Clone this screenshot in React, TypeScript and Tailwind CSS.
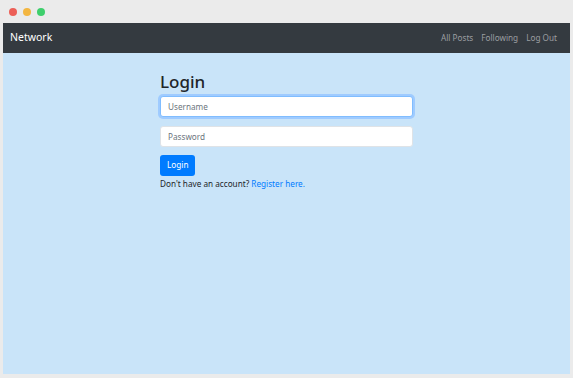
export default function App() {
  return (
    <div className="w-[573px] h-[378px] bg-[#ebebeb] flex flex-col font-['Noto_Sans','Open_Sans',sans-serif]">
      {/* title bar */}
      <div className="h-[23px] flex items-center gap-[6px] pl-[9px]">
        <span className="w-[8px] h-[8px] rounded-full bg-[#ec5f57]" />
        <span className="w-[8px] h-[8px] rounded-full bg-[#f3b641]" />
        <span className="w-[8px] h-[8px] rounded-full bg-[#3ecf6c]" />
      </div>

      <div className="flex-1 mx-[3px] mb-[4px] flex flex-col bg-[#c9e4f9]">
        {/* navbar */}
        <nav className="h-[30px] bg-[#343a40] flex items-center justify-between pl-[7px] pr-[13px]">
          <span className="text-white text-[10.5px]">Network</span>
          <div className="flex gap-[8px] text-[8.2px] text-[#9b9ea1]">
            <span>All Posts</span>
            <span>Following</span>
            <span>Log Out</span>
          </div>
        </nav>

        {/* login form */}
        <div className="w-[253px] mx-auto pt-[18px]">
          <h2 className="text-[17px] leading-[22px] font-medium text-[#212529] mb-[3px]">Login</h2>
          <input
            placeholder="Username"
            className="block w-full h-[21px] px-[7px] text-[8.2px] bg-white border border-[#80bdff] rounded-[3px] outline-none ring-[2px] ring-[#9fcbff] placeholder:text-[#6c757d]"
          />
          <input
            placeholder="Password"
            type="password"
            className="block w-full h-[21px] mt-[9px] px-[7px] text-[8.2px] bg-white border border-[#dfe3e7] rounded-[3px] outline-none placeholder:text-[#6c757d]"
          />
          <button className="mt-[8px] h-[21px] px-[7px] bg-[#007bff] text-white text-[8.2px] rounded-[3px]">Login</button>
          <p className="text-[8.2px] text-[#212529] leading-[13px] mt-[1px]">
            Don't have an account? <a className="text-[#007bff]">Register here.</a>
          </p>
        </div>
      </div>
    </div>
  );
}
